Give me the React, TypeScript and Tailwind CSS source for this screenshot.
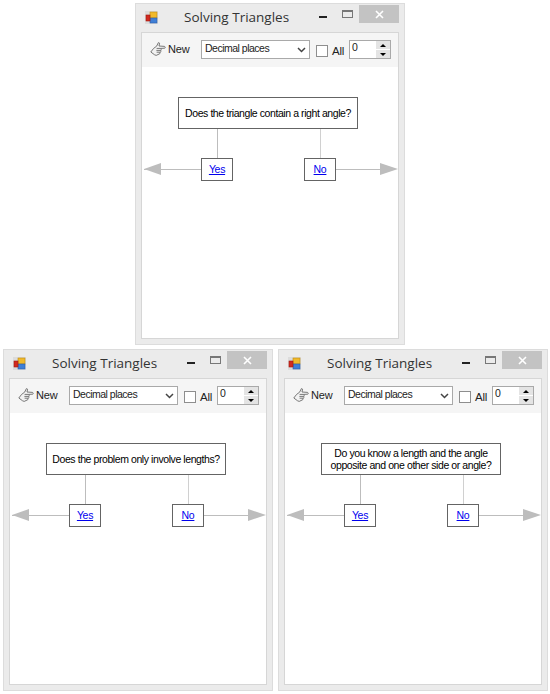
const ui = { fontFamily: '"Liberation Sans", Arial, sans-serif' };

function AppIcon() {
  return (
    <svg width="13" height="13" viewBox="0 0 13 13" className="shrink-0">
      <rect x="0" y="0" width="13" height="13" fill="#dcdcdc" />
      <rect x="5" y="1" width="7" height="6" fill="#f0b92c" stroke="#c08a10" strokeWidth="0.6" />
      <rect x="5" y="7" width="7" height="5" fill="#3f7fd6" stroke="#2a5da8" strokeWidth="0.6" />
      <rect x="1" y="4" width="4" height="6" fill="#d02a20" stroke="#a01810" strokeWidth="0.6" />
    </svg>
  );
}

function HandIcon() {
  return (
    <svg width="16" height="16" viewBox="0 0 16 16" fill="none" className="shrink-0">
      <path
        d="M0.8 11 L3.6 7.4 L6.6 5.2 L8.4 1.6 L9.6 2.2 L9 5 L14.6 5.4 Q15.8 6.2 14.8 7.2 L10.8 7.4 Q11.6 8.4 10.8 9.4 Q11.2 10.6 10.2 11.2 Q10.4 12.6 9.2 13 L6.2 14.4 L4.6 13.8 Z"
        fill="#f2f2f2"
        stroke="#6a6a6a"
        strokeWidth="0.9"
        strokeLinejoin="round"
      />
      <path d="M6.6 7.4 H10.8 M6.4 9.4 H10.8 M6.6 11.2 H10.2" stroke="#6a6a6a" strokeWidth="0.9" />
    </svg>
  );
}

function Toolbar() {
  return (
    <div className="h-[34px] bg-[#f5f5f5] flex items-start pt-[7px] pl-[8px] text-[11px] text-black">
      <div className="w-[16px] mt-[1px]">
        <HandIcon />
      </div>
      <span className="ml-[2px] mt-[1px] w-[33px] text-[11px] tracking-[-0.2px] text-[#222]">New</span>
      <div className="w-[109px] h-[19px] bg-white border border-[#a9a9a9] flex items-center justify-between pl-[3px] pr-[3px] text-[10.5px] tracking-[-0.5px] text-[#222]">
        <span className="-mt-[2px]">Decimal places</span>
        <svg width="9" height="6" viewBox="0 0 9 6" fill="none">
          <path d="M1 1 L4.5 4.5 L8 1" stroke="#444" strokeWidth="1.5" />
        </svg>
      </div>
      <div className="ml-[6px] mt-[5px] w-[12px] h-[12px] bg-white border border-[#8e8e8e]" />
      <span className="ml-[4px] mt-[3px] w-[17px] text-[11.5px] tracking-[-0.2px] text-[#222]">All</span>
      <div className="w-[42px] h-[19px] bg-white border border-[#a9a9a9] flex justify-between text-[10.5px] text-[#222]">
        <span className="pl-[2px] -mt-[1px]">0</span>
        <div className="w-[14px] flex flex-col gap-[1px] bg-white">
          <div className="flex-1 bg-[#e4e4e4] flex items-center justify-center">
            <div className="w-0 h-0 border-x-[3px] border-x-transparent border-b-[3px] border-b-black" />
          </div>
          <div className="flex-1 bg-[#e4e4e4] flex items-center justify-center">
            <div className="w-0 h-0 border-x-[3px] border-x-transparent border-t-[3px] border-t-black" />
          </div>
        </div>
      </div>
    </div>
  );
}

function Choice({ label, x }: { label: string; x: number }) {
  return (
    <a
      href="#"
      style={{ left: x }}
      className="absolute top-[91px] w-[32px] h-[23px] bg-white border border-[#646464] flex items-center justify-center text-[10.5px] tracking-[-0.3px] text-[#0000ee] underline"
    >
      {label}
    </a>
  );
}

function Flow({ lines }: { lines: string[] }) {
  return (
    <div className="relative flex-1 bg-white">
      {/* left and right arrows */}
      <div className="absolute left-[2px] top-[102px] w-[58px] h-[1px] bg-[#bdbdbd]" />
      <div className="absolute left-[194px] top-[102px] w-[59px] h-[1px] bg-[#bdbdbd]" />
      <div className="absolute left-[2px] top-[96px] w-0 h-0 border-y-[6px] border-y-transparent border-r-[17px] border-r-[#bdbdbd]" />
      <div className="absolute left-[238px] top-[96px] w-0 h-0 border-y-[6px] border-y-transparent border-l-[18px] border-l-[#bdbdbd]" />
      {/* connectors */}
      <div className="absolute left-[75px] top-[61px] w-[1px] h-[30px] bg-[#bdbdbd]" />
      <div className="absolute left-[178px] top-[61px] w-[1px] h-[30px] bg-[#d0d0d0]" />
      <div className="absolute left-[36px] top-[30px] w-[180px] h-[32px] bg-white border border-[#646464] flex flex-col items-center justify-center whitespace-nowrap text-[10.5px] tracking-[-0.42px] leading-[12px] text-black">
        {lines.map(l => (
          <span key={l}>{l}</span>
        ))}
      </div>
      <Choice label="Yes" x={59} />
      <Choice label="No" x={162} />
    </div>
  );
}

function TriangleWindow({ lines }: { lines: string[] }) {
  return (
    <div className="w-[270px] h-[342px] bg-[#ebebeb] border border-[#dcdcdc] flex flex-col shrink-0">
      <div className="relative h-[28px] shrink-0">
        <div className="absolute left-[9px] top-[7px]">
          <AppIcon />
        </div>
        <span
          className="absolute left-[48px] top-[4px] text-[13.5px] leading-[18px] text-[#333]"
          style={{ fontFamily: '"Open Sans", sans-serif' }}
        >
          Solving Triangles
        </span>
        <div className="absolute left-[183px] top-[12px] w-[8px] h-[2px] bg-[#222]" />
        <div className="absolute left-[206px] top-[6px] w-[11px] h-[8px] border border-[#777] border-t-2" />
        <div className="absolute left-[223px] top-[1px] w-[40px] h-[18px] bg-[#c3c3c3] flex items-center justify-center">
          <svg width="9" height="9" viewBox="0 0 9 9" fill="none">
            <path d="M1 1 L8 8 M8 1 L1 8" stroke="#fff" strokeWidth="1.6" />
          </svg>
        </div>
      </div>
      <div className="mx-[5px] mb-[5px] flex-1 border border-[#d6d6d6] flex flex-col">
        <Toolbar />
        <Flow lines={lines} />
      </div>
    </div>
  );
}

export default function App() {
  return (
    <div style={ui} className="w-[550px] h-[694px] bg-white pt-[3px]">
      <div className="pl-[135px]">
        <TriangleWindow lines={['Does the triangle contain a right angle?']} />
      </div>
      <div className="flex gap-[5px] pl-[3px] pt-[4px]">
        <TriangleWindow lines={['Does the problem only involve lengths?']} />
        <TriangleWindow lines={['Do you know a length and the angle', 'opposite and one other side or angle?']} />
      </div>
    </div>
  );
}
